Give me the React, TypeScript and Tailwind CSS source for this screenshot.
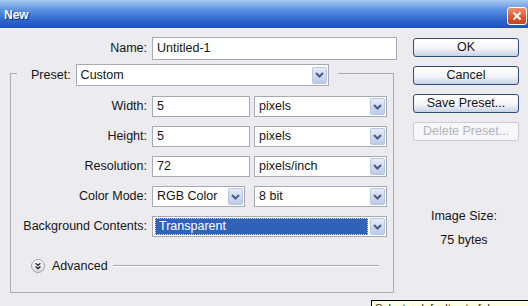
import React from "react";

function Chevron() {
  return (
    <svg width="9" height="6" viewBox="0 0 9 6">
      <path d="M1 1 L4.5 4.5 L8 1" fill="none" stroke="#4b5b80" strokeWidth="2" />
    </svg>
  );
}

function ArrowBox() {
  return (
    <div className="mr-[1px] flex h-[17px] w-[15px] shrink-0 items-center justify-center rounded-[2px] border border-[#b7c6e6] bg-[linear-gradient(to_bottom,#e6ecf8,#bccbea)]">
      <Chevron />
    </div>
  );
}

function Select({
  value,
  className,
  highlighted = false,
}: {
  value: string;
  className: string;
  highlighted?: boolean;
}) {
  return (
    <div className={`flex items-center border border-[#a6aab3] bg-white ${className}`}>
      {highlighted ? (
        <div className="mx-[2px] flex h-[17px] flex-1 items-center border border-dotted border-[#e8e2a8] bg-[#3162b8] pl-[3px] text-white">
          {value}
        </div>
      ) : (
        <span className="flex-1 pl-[4px]">{value}</span>
      )}
      <ArrowBox />
    </div>
  );
}

function TextField({ value, className }: { value: string; className: string }) {
  return (
    <div className={`flex items-center border border-[#a6aab3] bg-white pl-[4px] ${className}`}>
      {value}
    </div>
  );
}

function Row({ label, children }: { label: string; children: React.ReactNode }) {
  return (
    <div className="flex h-[21px] items-center">
      <span className="w-[136px] text-right">{label}</span>
      <div className="ml-[5px] flex items-center">{children}</div>
    </div>
  );
}

function XpButton({ label, disabled = false }: { label: string; disabled?: boolean }) {
  if (disabled) {
    return (
      <div className="flex h-[19px] w-[106px] items-center justify-center rounded-[2px] border border-[#cdccd2] bg-[#f7f7f9] text-[#b3b3b8]">
        {label}
      </div>
    );
  }
  return (
    <div className="flex h-[19px] w-[106px] items-center justify-center rounded-[3px] border border-[#2d4d80] bg-[linear-gradient(to_bottom,#ffffff,#f2f4f8_55%,#c9d3e6)]">
      {label}
    </div>
  );
}

function AdvancedIcon() {
  return (
    <svg width="14" height="14" viewBox="0 0 14 14">
      <defs>
        <linearGradient id="adv" x1="0" y1="0" x2="0" y2="1">
          <stop offset="0" stopColor="#ffffff" />
          <stop offset="1" stopColor="#d6d6da" />
        </linearGradient>
      </defs>
      <circle cx="7" cy="7" r="6.5" fill="url(#adv)" stroke="#a3a3a8" />
      <path d="M4.6 4.2 L7 6.4 L9.4 4.2 M4.6 7.4 L7 9.6 L9.4 7.4" fill="none" stroke="#2a2a2a" strokeWidth="1.3" />
    </svg>
  );
}

export default function App() {
  return (
    <div className="relative h-[306px] w-[528px] overflow-hidden bg-[#ecebef] font-['Liberation_Sans',Arial,sans-serif] text-[12.5px] leading-none text-[#151515]">
      {/* title bar */}
      <div className="flex h-[28px] items-start justify-between bg-[linear-gradient(to_bottom,#a9cbf2,#5b90e0_35%,#2c64cc_75%,#1f52bc)]">
        <span className="pl-[4px] pt-[9px] text-[12px] font-bold text-white [text-shadow:1px_1px_0_#0b2f80]">
          New
        </span>
        <div className="mr-[1px] mt-[7px] flex h-[18px] w-[20px] items-center justify-center rounded-[3px] border border-white bg-[linear-gradient(to_bottom,#f0906c,#d9552d_60%,#c8431c)]">
          <svg width="10" height="10" viewBox="0 0 10 10">
            <path d="M1.5 1.5 L8.5 8.5 M8.5 1.5 L1.5 8.5" stroke="#fff" strokeWidth="2" />
          </svg>
        </div>
      </div>

      <div className="flex">
        <div className="w-[400px]">
          <div className="mt-[9px] flex h-[23px] items-center">
            <span className="w-[147px] text-right">Name:</span>
            <TextField value="Untitled-1" className="ml-[5px] h-[23px] w-[245px]" />
          </div>

          <div className="ml-[10px] mt-[13px] h-[220px] w-[384px] border border-[#aeadb3]">
            <div className="-mt-[10px] ml-[6px] flex w-fit items-center bg-[#ecebef] pl-[14px] pr-[9px]">
              <span>Preset:</span>
              <Select value="Custom" className="ml-[5px] h-[22px] w-[253px]" />
            </div>

            <div className="mt-[10px] flex flex-col gap-[9px]">
              <Row label="Width:">
                <TextField value="5" className="h-[21px] w-[98px]" />
                <Select value="pixels" className="ml-[4px] h-[21px] w-[133px]" />
              </Row>
              <Row label="Height:">
                <TextField value="5" className="h-[21px] w-[98px]" />
                <Select value="pixels" className="ml-[4px] h-[21px] w-[133px]" />
              </Row>
              <Row label="Resolution:">
                <TextField value="72" className="h-[21px] w-[98px]" />
                <Select value="pixels/inch" className="ml-[4px] h-[21px] w-[133px]" />
              </Row>
              <Row label="Color Mode:">
                <Select value="RGB Color" className="h-[21px] w-[93px]" />
                <Select value="8 bit" className="ml-[9px] h-[21px] w-[133px]" />
              </Row>
              <Row label="Background Contents:">
                <Select value="Transparent" className="h-[21px] w-[235px]" highlighted />
              </Row>
            </div>

            <div className="mt-[22px] flex h-[14px] items-center pl-[20px] pr-[14px]">
              <AdvancedIcon />
              <span className="ml-[7px]">Advanced</span>
              <div className="ml-[5px] h-[2px] flex-1 border-t border-[#a9a9ae] bg-white" />
            </div>
          </div>
        </div>

        <div className="flex flex-1 flex-col">
          <div className="ml-[13px] mt-[10px] flex flex-col gap-[9px]">
            <XpButton label="OK" />
            <XpButton label="Cancel" />
            <XpButton label="Save Preset..." />
            <XpButton label="Delete Preset..." disabled />
          </div>
          <div className="mt-[67px] flex flex-col items-center gap-[8px] leading-[16px]">
            <span>Image Size:</span>
            <span>75 bytes</span>
          </div>
        </div>
      </div>

      {/* tooltip peeking in at the bottom */}
      <div className="absolute left-[371px] top-[300px] w-[200px] border border-black bg-[#ffffe1] px-[3px] pt-[2px] text-[11px] whitespace-nowrap">
        Select a default set of document settings
      </div>
    </div>
  );
}
